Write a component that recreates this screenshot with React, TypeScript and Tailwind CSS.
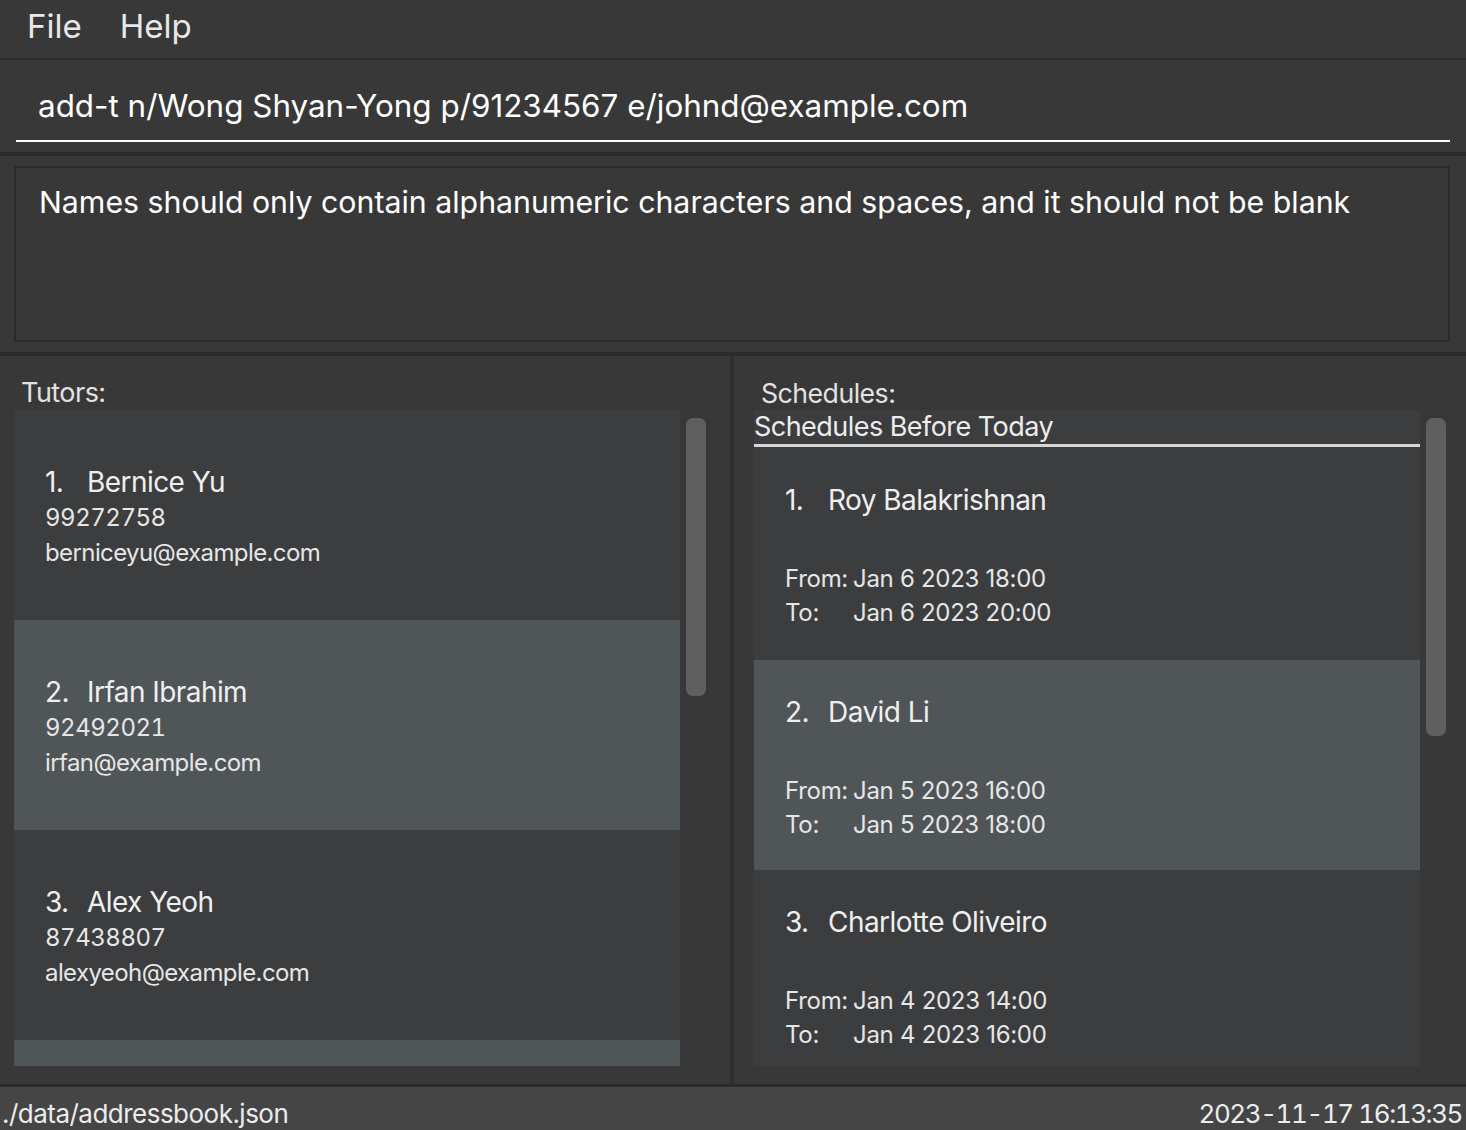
import React from 'react';

interface Tutor {
  id: number;
  name: string;
  phone: string;
  email: string;
}

interface Schedule {
  id: number;
  tutor: string;
  from: string;
  to: string;
}

const tutors: Tutor[] = [
  { id: 1, name: 'Bernice Yu', phone: '99272758', email: 'berniceyu@example.com' },
  { id: 2, name: 'Irfan Ibrahim', phone: '92492021', email: 'irfan@example.com' },
  { id: 3, name: 'Alex Yeoh', phone: '87438807', email: 'alexyeoh@example.com' },
];

const schedules: Schedule[] = [
  { id: 1, tutor: 'Roy Balakrishnan', from: 'Jan 6 2023 18:00', to: 'Jan 6 2023 20:00' },
  { id: 2, tutor: 'David Li', from: 'Jan 5 2023 16:00', to: 'Jan 5 2023 18:00' },
  { id: 3, tutor: 'Charlotte Oliveiro', from: 'Jan 4 2023 14:00', to: 'Jan 4 2023 16:00' },
];

// alternating row colours, like the JavaFX list cells
const rowBg = (i: number) => (i % 2 === 0 ? 'bg-[#3c3d3f]' : 'bg-[#505558]');

const TutorCard: React.FC<{ tutor: Tutor; index: number }> = ({ tutor, index }) => (
  <div className={`h-[210px] shrink-0 flex flex-col justify-center pl-[31px] pt-[4px] ${rowBg(index)}`}>
    <div className="flex text-[28px] leading-[36px] tracking-[-0.02em] text-[#efefef]">
      <span className="w-[42px]">{tutor.id}.</span>
      <span>{tutor.name}</span>
    </div>
    <div className="text-[24px] leading-[35px] tracking-[-0.02em] tabular-nums text-[#e6e6e6]">{tutor.phone}</div>
    <div className="text-[24px] leading-[35px] tracking-[-0.025em] text-[#e6e6e6]">{tutor.email}</div>
  </div>
);

const ScheduleCard: React.FC<{ schedule: Schedule; index: number; first?: boolean }> = ({ schedule, index, first }) => (
  <div className={`${first ? 'h-[213px]' : 'h-[210px]'} shrink-0 flex flex-col justify-center pl-[31px] pt-[5px] ${rowBg(index)}`}>
    <div className="flex text-[28px] leading-[36px] tracking-[-0.02em] text-[#efefef]">
      <span className="w-[43px]">{schedule.id}.</span>
      <span>{schedule.tutor}</span>
    </div>
    <div className="mt-[44px] flex text-[24px] leading-[34px] tracking-[-0.012em] text-[#e6e6e6]">
      <span className="w-[68px]">From:</span>
      <span>{schedule.from}</span>
    </div>
    <div className="flex text-[24px] leading-[34px] tracking-[-0.012em] text-[#e6e6e6]">
      <span className="w-[68px]">To:</span>
      <span>{schedule.to}</span>
    </div>
  </div>
);

const App: React.FC = () => {
  return (
    <div className="w-[1466px] h-[1130px] flex flex-col overflow-hidden bg-[#383838] font-['Inter','Noto_Sans',sans-serif]">
      {/* Menu bar */}
      <div className="h-[60px] shrink-0 flex items-center gap-[38px] pl-[27px] pb-[4px] border-b-2 border-[#2b2b2b] text-[33px] text-[#e8e8e8]">
        <span>File</span>
        <span>Help</span>
      </div>

      {/* Command box */}
      <div className="h-[92px] shrink-0 px-[16px] pt-[27px]">
        <div className="h-[55px] border-b-2 border-white pl-[22px] text-[31.4px] leading-[38px] text-white">
          add-t n/Wong Shyan-Yong p/91234567 e/johnd@example.com
        </div>
      </div>

      <div className="h-[4px] shrink-0 bg-[#2b2b2b]" />

      {/* Result display */}
      <div className="h-[196px] shrink-0 pl-[14px] pr-[16px] py-[10px]">
        <div className="h-full border-2 border-[#2b2b2b] pl-[23px] pt-[16px] text-[30.3px] leading-[36px] text-white">
          Names should only contain alphanumeric characters and spaces, and it should not be blank
        </div>
      </div>

      <div className="h-[4px] shrink-0 bg-[#2b2b2b]" />

      {/* Lists */}
      <div className="flex-1 flex min-h-0">
        <div className="w-[730px] shrink-0 flex flex-col pl-[14px] pb-[18px]">
          <div className="h-[54px] shrink-0 flex items-end pb-[1px] pl-[7px] text-[27px] leading-[32px] tracking-[-0.02em] text-[#e2e2e2]">
            Tutors:
          </div>
          <div className="flex-1 flex gap-[6px] min-h-0">
            <div className="w-[666px] flex flex-col overflow-hidden">
              {tutors.map((t, i) => (
                <TutorCard key={t.id} tutor={t} index={i} />
              ))}
              <div className="h-[210px] shrink-0 bg-[#505558]" />
            </div>
            <div className="w-[20px] pt-[8px]">
              <div className="h-[278px] rounded-[7px] bg-[#5f5f5f]" />
            </div>
          </div>
        </div>

        <div className="w-[4px] shrink-0 bg-[#2e2e2e]" />

        <div className="flex-1 flex flex-col pl-[20px] pb-[18px]">
          <div className="h-[54px] shrink-0 flex items-end pb-[1px] pl-[7px] text-[26.7px] leading-[32px] tracking-[-0.02em] text-[#e2e2e2]">
            Schedules:
          </div>
          <div className="flex-1 flex gap-[6px] min-h-0">
            <div className="w-[666px] flex flex-col overflow-hidden">
              <div className="h-[37px] shrink-0 bg-[#3c3d3f] border-b-[3px] border-[#d6d6d6] text-[27px] leading-[34px] tracking-[-0.02em] text-[#ececec]">
                Schedules Before Today
              </div>
              {schedules.map((s, i) => (
                <ScheduleCard key={s.id} schedule={s} index={i} first={i === 0} />
              ))}
            </div>
            <div className="w-[20px] pt-[8px]">
              <div className="h-[318px] rounded-[7px] bg-[#5f5f5f]" />
            </div>
          </div>
        </div>
      </div>

      {/* Status bar */}
      <div className="h-[46px] shrink-0 flex items-center justify-between border-t-[3px] border-[#2b2b2b] bg-[#454545] pl-[2px] pr-[4px] pt-[10px] text-[26px] tracking-[-0.02em] text-[#ececec]">
        <span>./data/addressbook.json</span>
        <span className="tabular-nums tracking-[-0.055em]">2023-11-17 16:13:35</span>
      </div>
    </div>
  );
};

export default App;
